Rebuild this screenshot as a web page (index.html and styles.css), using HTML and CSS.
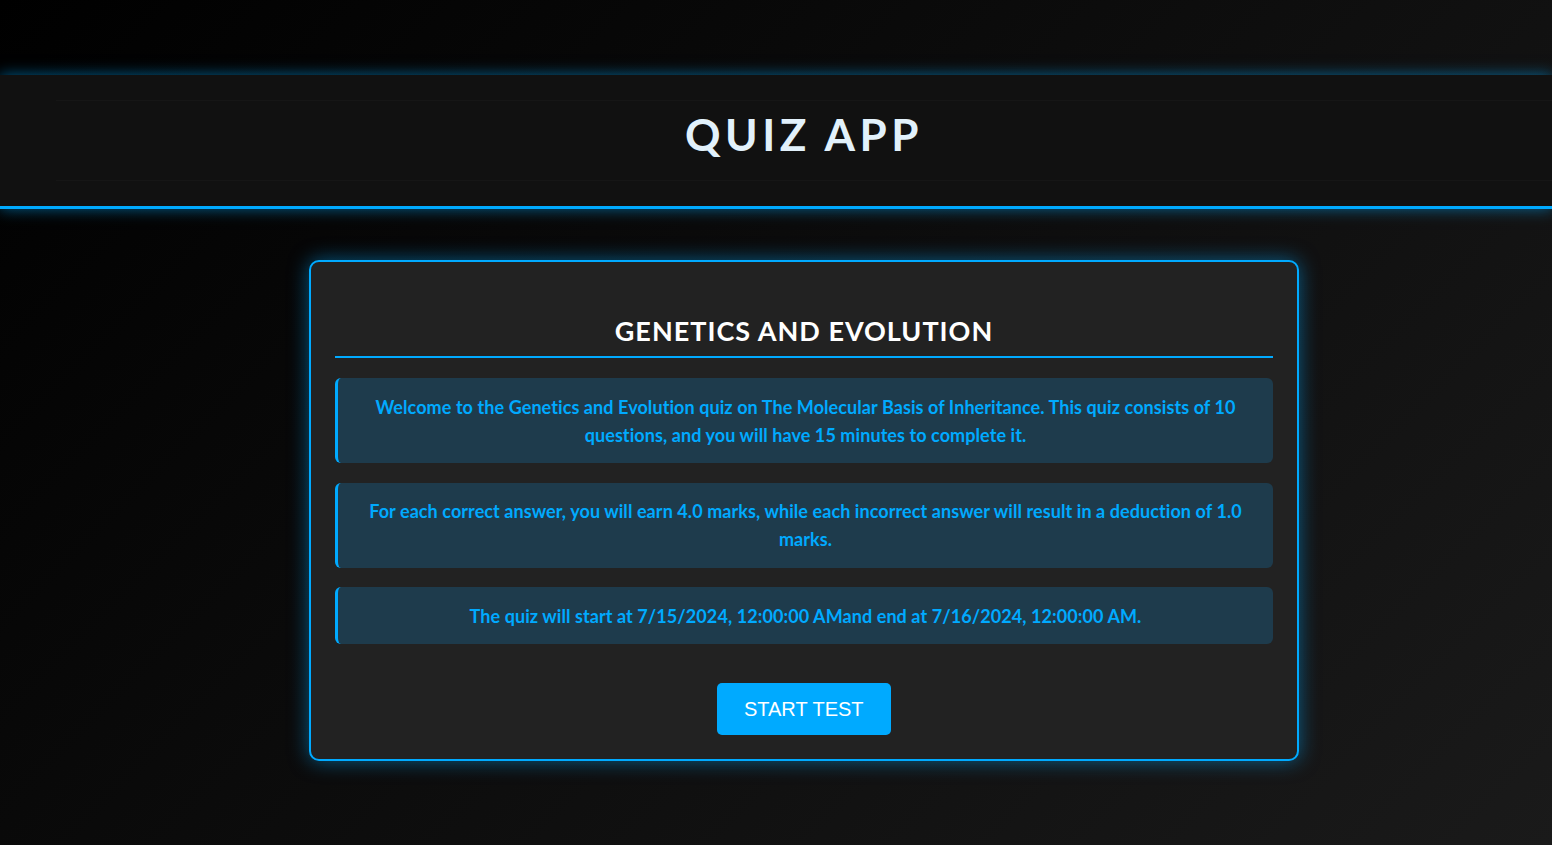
FILE: index.html
```html
<!DOCTYPE html>
<html lang="en">
<head>
<meta charset="utf-8">
<title>Quiz App</title>
<link rel="stylesheet" href="styles.css">
</head>
<body>
<div class="page">
  <header class="app-header">
    <div class="header-inner">
      <h1 class="app-title">QUIZ APP</h1>
    </div>
  </header>
  <main class="main">
    <section class="card">
      <h2 class="card-title">GENETICS AND EVOLUTION</h2>
      <div class="info">Welcome to the Genetics and Evolution quiz on The Molecular Basis of Inheritance. This quiz consists of 10 questions, and you will have 15 minutes to complete it.</div>
      <div class="info">For each correct answer, you will earn 4.0 marks, while each incorrect answer will result in a deduction of 1.0 marks.</div>
      <div class="info">The quiz will start at 7/15/2024, 12:00:00 AMand end at 7/16/2024, 12:00:00 AM.</div>
      <div class="actions">
        <button class="start-btn" type="button">START TEST</button>
      </div>
    </section>
  </main>
</div>
</body>
</html>
```
FILE: styles.css
```css
* { box-sizing: border-box; }
html, body { margin: 0; padding: 0; height: 100%; }
body {
  background: linear-gradient(135deg, #000000 0%, #1a1a1a 100%);
  font-family: Lato, "Noto Sans", sans-serif;
  overflow: hidden;
}
.page {
  min-height: 845px;
  padding-top: 75px;
}
.app-header {
  background: #111111;
  border-bottom: 3px solid #00aaff;
  box-shadow: 0 0 14px rgba(0, 170, 255, 0.55);
  height: 134px;
  padding: 25px 0 25px 56px;
}
.header-inner {
  height: 81px;
  border-top: 1px solid #161616;
  border-bottom: 1px solid #161616;
  display: flex;
  align-items: flex-start;
  justify-content: center;
}
.app-title {
  margin: 5px 0 0;
  color: #e2f1fb;
  font-size: 44px;
  font-weight: 700;
  letter-spacing: 4.5px;
  line-height: 56px;
}
.main {
  display: flex;
  justify-content: center;
  padding: 51px 0 0 56px;
}
.card {
  width: 990px;
  background: #222222;
  border: 2px solid #00aaff;
  border-radius: 10px;
  box-shadow: 0 0 20px rgba(0, 170, 255, 0.5);
  padding: 24px;
}
.card-title {
  margin: 29px 0 20px;
  padding-bottom: 9px;
  border-bottom: 2px solid #00aaff;
  color: #ffffff;
  font-size: 27px;
  font-weight: 700;
  letter-spacing: 1px;
  line-height: 32px;
  text-align: center;
}
.info {
  background: #1e3b4c;
  border-left: 3px solid #00aaff;
  border-radius: 6px;
  padding: 14.5px 20px;
  margin-bottom: 19.5px;
  color: #00aaff;
  font-size: 18px;
  font-weight: 700;
  letter-spacing: 0.08px;
  line-height: 28px;
  text-align: center;
}
.actions {
  display: flex;
  justify-content: center;
  padding-top: 19px;
}
.start-btn {
  background: #00aaff;
  color: #ffffff;
  border: none;
  border-radius: 5px;
  font-family: "Liberation Sans", Arial, sans-serif;
  font-size: 20px;
  line-height: 24px;
  padding: 14px 27.5px 14px 27px;
  cursor: pointer;
}
```
